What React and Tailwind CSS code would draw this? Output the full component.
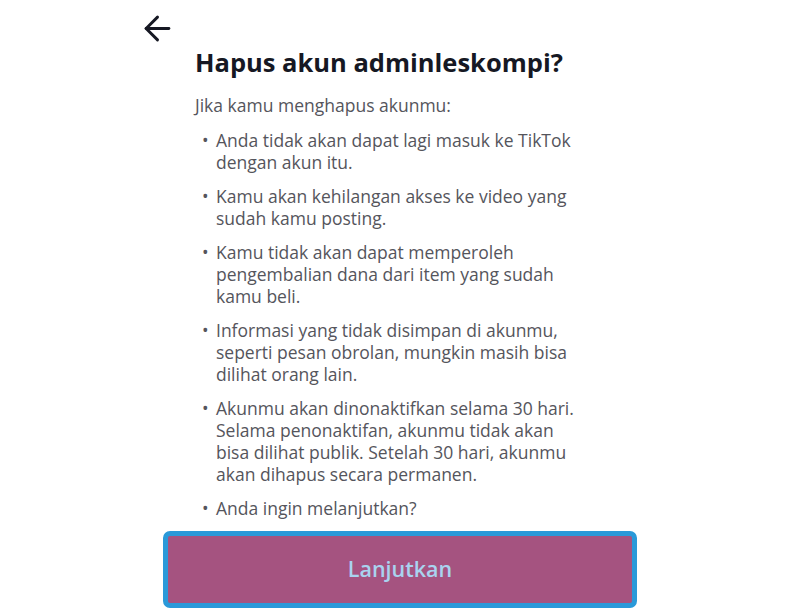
import React from 'react';
import { ArrowLeft } from 'lucide-react';

const items = [
    ['Anda tidak akan dapat lagi masuk ke TikTok', 'dengan akun itu.'],
    ['Kamu akan kehilangan akses ke video yang', 'sudah kamu posting.'],
    ['Kamu tidak akan dapat memperoleh', 'pengembalian dana dari item yang sudah', 'kamu beli.'],
    ['Informasi yang tidak disimpan di akunmu,', 'seperti pesan obrolan, mungkin masih bisa', 'dilihat orang lain.'],
    ['Akunmu akan dinonaktifkan selama 30 hari.', 'Selama penonaktifan, akunmu tidak akan', 'bisa dilihat publik. Setelah 30 hari, akunmu', 'akan dihapus secara permanen.'],
    ['Anda ingin melanjutkan?'],
];

const App = () => {
    return (
        <div className="w-[800px] h-[614px] bg-white overflow-hidden font-['Open_Sans',sans-serif]">
            <div className="pl-[138px] pt-[9px]">
                <ArrowLeft size={39} strokeWidth={1.8} className="text-[#161823]" />
            </div>

            <div className="pl-[195px]">
                <h1 className="-mt-[2px] text-[25.5px] leading-[32px] font-bold text-[#161823]">Hapus akun adminleskompi?</h1>
                <p className="mt-[16px] text-[17.5px] leading-[22px] text-[#55555c]">Jika kamu menghapus akunmu:</p>

                <ul className="mt-[13px] flex flex-col gap-[12px]">
                    {items.map((lines, i) => (
                        <li key={i} className="flex text-[17.5px] leading-[22px] text-[#55555c]">
                            <span className="w-[21px] pl-[7px]">•</span>
                            <span>
                                {lines.map((l, j) => (
                                    <span key={j} className="block whitespace-nowrap">{l}</span>
                                ))}
                            </span>
                        </li>
                    ))}
                </ul>
            </div>

            <div className="pl-[163px] pt-[12px]">
                <button className="w-[474px] h-[77px] rounded-[7px] border-[5px] border-[#2a99d9] bg-[#a55380] flex items-center justify-center">
                    <span className="text-[21.5px] font-semibold text-[#a9d3ef]">Lanjutkan</span>
                </button>
            </div>
        </div>
    );
};

export default App;
